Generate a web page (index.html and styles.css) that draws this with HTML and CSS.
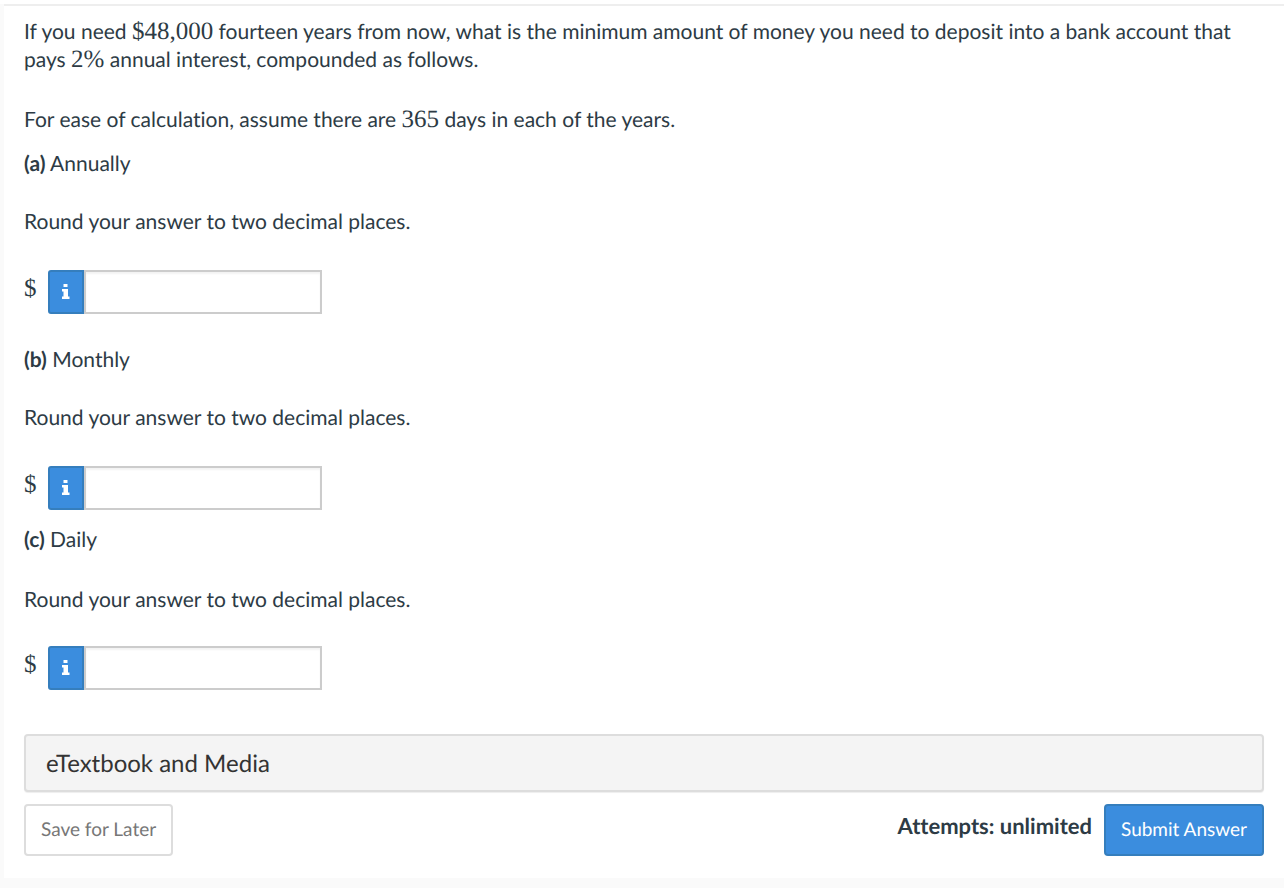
FILE: index.html
```html
<!DOCTYPE html>
<html lang="en">
<head>
<meta charset="utf-8">
<title>Compound interest question</title>
<link rel="stylesheet" href="styles.css">
</head>
<body>
<main class="question">
  <p class="intro">If you need <span class="math">$48,000</span> fourteen years from now, what is the minimum amount of money you need to deposit into a bank account that pays <span class="math">2%</span> annual interest, compounded as follows.</p>
  <p class="note">For ease of calculation, assume there are <span class="math">365</span> days in each of the years.</p>
  <section class="part">
    <p class="part-title"><b>(a)</b> Annually</p>
    <p class="hint">Round your answer to two decimal places.</p>
    <div class="answer">
      <label class="math currency" for="answer-a">$</label>
      <button class="info" type="button" aria-label="Information"><svg viewBox="0 0 8 16" width="8" height="16"><path d="M1.500 0h4v3h-4zM0 5h6v7.500h1.500V15H0v-2.500h1.500v-5H0z"/></svg></button>
      <input class="field" id="answer-a" type="text">
    </div>
  </section>
  <section class="part">
    <p class="part-title"><b>(b)</b> Monthly</p>
    <p class="hint">Round your answer to two decimal places.</p>
    <div class="answer">
      <label class="math currency" for="answer-b">$</label>
      <button class="info" type="button" aria-label="Information"><svg viewBox="0 0 8 16" width="8" height="16"><path d="M1.500 0h4v3h-4zM0 5h6v7.500h1.500V15H0v-2.500h1.500v-5H0z"/></svg></button>
      <input class="field" id="answer-b" type="text">
    </div>
  </section>
  <section class="part part-last">
    <p class="part-title"><b>(c)</b> Daily</p>
    <p class="hint">Round your answer to two decimal places.</p>
    <div class="answer">
      <label class="math currency" for="answer-c">$</label>
      <button class="info" type="button" aria-label="Information"><svg viewBox="0 0 8 16" width="8" height="16"><path d="M1.500 0h4v3h-4zM0 5h6v7.500h1.500V15H0v-2.500h1.500v-5H0z"/></svg></button>
      <input class="field" id="answer-c" type="text">
    </div>
  </section>
  <button class="media" type="button">eTextbook and Media</button>
  <footer class="actions">
    <button class="btn save" type="button">Save for Later</button>
    <span class="attempts">Attempts: unlimited</span>
    <button class="btn submit" type="button">Submit Answer</button>
  </footer>
</main>
</body>
</html>
```
FILE: styles.css
```css
* { box-sizing: border-box; }
body {
  margin: 0;
  padding: 4px 0 10px 4px;
  background: linear-gradient(#fff, #fff) top / 100% 4px no-repeat #fafafa;
  color: #2d3b45;
  font: 21px/28px Lato, sans-serif;
  text-rendering: geometricPrecision;
  font-variant-ligatures: none;
}
p { margin: 0; }
button, input { font-family: inherit; text-rendering: inherit; }
.question {
  padding: 12px 20px 22px;
  background: #fff;
  border-top: 2px solid #eee;
}
.math { font-family: "Liberation Serif", serif; font-size: 25px; line-height: 24px; }
.note { margin-top: 32px; }
.part { margin-top: 16px; }
.part + .part { margin-top: 32px; }
.part + .part-last { margin-top: 16px; }
.hint { margin-top: 30px; }
.answer { display: flex; margin-top: 34px; }
.part-last .hint { margin-top: 32px; }
.part-last .answer { margin-top: 32px; }
.currency { width: 24px; padding-top: 7px; }
.info {
  display: flex;
  align-items: center;
  justify-content: center;
  width: 36px;
  height: 44px;
  padding: 0;
  border: 2px solid #357ebd;
  border-radius: 3px 0 0 3px;
  background: #3b8dde;
}
.info svg { fill: #fff; }
.field {
  width: 238px;
  height: 44px;
  padding: 0 12px;
  border: 2px solid #ccc;
  box-shadow: inset 0 2px 2px #f3f3f3;
  font-size: 21px;
}
.media {
  display: block;
  width: 100%;
  height: 58px;
  margin-top: 44px;
  padding: 0 20px;
  border: 2px solid #ddd;
  border-radius: 4px;
  box-shadow: 0 1px 1px #eee;
  background: #f4f4f4;
  color: #333;
  font-size: 24px;
  font-variant-ligatures: none;
  text-align: left;
}
.actions { display: flex; align-items: center; margin-top: 12px; }
.btn {
  height: 52px;
  padding: 0 15px 2px;
  border: 2px solid #ddd;
  border-radius: 4px;
  background: #fff;
  color: #777;
  font-size: 19px;
}
.attempts { margin: 0 12px 8px auto; font-size: 22px; font-weight: 700; }
.submit { border-color: #357ebd; background: #3b8dde; color: #fff; }
```
